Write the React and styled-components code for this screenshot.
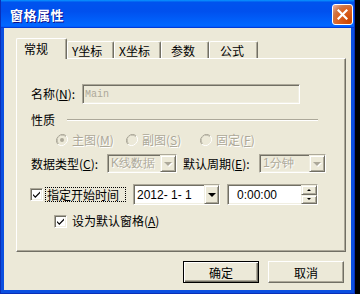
import React from "react";
import styled, { createGlobalStyle, css } from "styled-components";

const Global = createGlobalStyle`
  html, body { margin: 0; padding: 0; background: #000; }
  body { width: 360px; height: 294px; overflow: hidden; font-family: "Noto Sans CJK SC", "Liberation Sans", sans-serif; font-size: 12px; }
  #root { width: 360px; height: 294px; }
`;

const sunken = css`
  box-sizing: border-box;
  border: 1px solid;
  border-color: #aca899 #ffffff #ffffff #aca899;
  box-shadow: inset 1px 1px 0 #716f64, inset -1px -1px 0 #f1efe2;
`;

const raised = css`
  box-sizing: border-box;
  border: 1px solid;
  border-color: #f1efe2 #716f64 #716f64 #f1efe2;
  box-shadow: inset 1px 1px 0 #ffffff, inset -1px -1px 0 #aca899;
  background: #ece9d8;
`;

const Page = styled.div`
  display: flex;
  width: 360px;
  height: 294px;
  background: #000;
`;

const Window = styled.div`
  box-sizing: border-box;
  width: 355px;
  height: 294px;
  display: flex;
  flex-direction: column;
  background: #0b4fe0;
  border-left: 1px solid #0a2fb8;
  border-right: 1px solid #0a2fb8;
  border-bottom: 1px solid #0a2fb8;
`;

const TitleBar = styled.div`
  height: 28px;
  flex: none;
  display: flex;
  align-items: center;
  justify-content: space-between;
  padding: 0 1px 0 9px;
  background: linear-gradient(#0997ff, #0053ee 8%, #0050ee 40%, #0066ff 88%, #0066ff 93%, #005bff 95%, #003dd7 96%, #003dd7);
`;

const Title = styled.span`
  color: #fff;
  font-weight: bold;
  font-size: 13px;
  letter-spacing: 0.5px;
  text-shadow: 1px 1px 0 #0f1089;
`;

const CloseBtn = styled.div`
  box-sizing: border-box;
  width: 21px;
  height: 21px;
  border: 1px solid #fff;
  border-radius: 3px;
  background: radial-gradient(circle at 85% 85%, #cc4600 0%, #dc6527 55%, #cd7546 70%, #e5a189 90%);
  display: flex;
  align-items: center;
  justify-content: center;
`;

const Client = styled.div`
  flex: 1;
  margin: 0 3px 3px 3px;
  background: #ece9d8;
  display: flex;
  flex-direction: column;
  padding: 10px 0 0 12px;
`;

const TabStrip = styled.div`
  display: flex;
  align-items: flex-end;
  height: 20px;
`;

const Tab = styled.div`
  box-sizing: border-box;
  width: ${(p) => p.$w}px;
  height: ${(p) => (p.$active ? 21 : 17)}px;
  margin-bottom: ${(p) => (p.$active ? -1 : 0)}px;
  position: relative;
  z-index: ${(p) => (p.$active ? 2 : 1)};
  background: #ece9d8;
  border-top: 1px solid #fff;
  border-left: 1px solid #fff;
  border-right: 1px solid #716f64;
  box-shadow: inset -1px 0 0 #aca899;
  border-top-left-radius: 2px;
  border-top-right-radius: 2px;
  display: flex;
  align-items: center;
  padding-left: ${(p) => p.$pl}px;
  padding-bottom: ${(p) => (p.$active ? 2 : 0)}px;
  color: #000;
  font-size: 12px;
  font-family: "Noto Sans CJK SC", "Liberation Serif", sans-serif;
`;

const Panel = styled.div`
  box-sizing: border-box;
  width: 330px;
  height: 194px;
  border-top: 1px solid #fff;
  border-left: 1px solid #fff;
  border-right: 1px solid #716f64;
  border-bottom: 1px solid #716f64;
  box-shadow: inset -1px -1px 0 #aca899;
  display: flex;
  flex-direction: column;
  padding: 25px 0 0 14px;
`;

const Row = styled.div`
  display: flex;
  align-items: center;
  height: ${(p) => p.$h}px;
  margin-top: ${(p) => p.$mt || 0}px;
  margin-left: ${(p) => p.$ml || 0}px;
`;

const Label = styled.span`
  white-space: nowrap;
  color: ${(p) => (p.$disabled ? "#aca899" : "#000")};
  text-shadow: ${(p) => (p.$disabled ? "1px 1px 0 #fff" : "none")};
  width: ${(p) => (p.$w ? p.$w + "px" : "auto")};
  flex: none;
  font-size: 12px;
  line-height: 14px;
`;

const U = styled.span`
  text-decoration: underline;
`;

const TextField = styled.div`
  ${sunken};
  width: ${(p) => p.$w}px;
  height: ${(p) => p.$h}px;
  background: ${(p) => (p.$disabled ? "#ece9d8" : "#fff")};
  display: flex;
  align-items: center;
  padding-left: ${(p) => p.$pl || 3}px;
  color: ${(p) => (p.$disabled ? "#aca899" : "#000")};
  font-family: ${(p) => (p.$mono ? '"Liberation Mono", monospace' : '"Liberation Sans", sans-serif')};
  font-size: ${(p) => (p.$mono ? 10 : 12)}px;
  flex: none;
  margin-left: ${(p) => p.$ml || 0}px;
`;

const FieldText = styled.span`
  flex: 1;
  white-space: pre;
  text-shadow: ${(p) => (p.$disabled ? "1px 1px 0 #fff" : "none")};
`;

const Etched = styled.div`
  width: 251px;
  margin-left: 12px;
  border-top: 1px solid #aca899;
  border-bottom: 1px solid #fff;
`;

const RadioItem = styled.div`
  display: flex;
  align-items: center;
  gap: 4px;
  width: ${(p) => p.$w}px;
  flex: none;
`;

const DropBtn = styled.div`
  ${raised};
  width: ${(p) => p.$w || 16}px;
  height: 100%;
  display: flex;
  align-items: center;
  justify-content: center;
  flex: none;
`;

const Arrow = styled.div`
  width: 0;
  height: 0;
  border-left: ${(p) => p.$s}px solid transparent;
  border-right: ${(p) => p.$s}px solid transparent;
  ${(p) => (p.$up ? "border-bottom" : "border-top")}: ${(p) => p.$s}px solid ${(p) => (p.$disabled ? "#aca899" : "#000")};
  filter: ${(p) => (p.$disabled ? "drop-shadow(1px 1px 0 #fff)" : "none")};
`;

const Box = styled.div`
  ${sunken};
  width: 13px;
  height: 13px;
  background: #fff;
  flex: none;
  display: flex;
  align-items: center;
  justify-content: center;
  margin-left: ${(p) => p.$ml || 0}px;
`;

const Focus = styled.div`
  box-sizing: border-box;
  height: 15px;
  width: 81px;
  border: 1px dotted #000;
  display: flex;
  align-items: center;
  padding-left: 1px;
  margin-left: 2px;
`;

const Spin = styled.div`
  display: flex;
  flex-direction: column;
  width: 16px;
  height: 100%;
  flex: none;
`;

const SpinBtn = styled.div`
  ${raised};
  flex: 1;
  display: flex;
  align-items: center;
  justify-content: center;
`;

const Buttons = styled.div`
  display: flex;
  justify-content: flex-end;
  gap: 9px;
  margin-top: 9px;
  padding-right: 7px;
`;

const Button = styled.div`
  box-sizing: border-box;
  width: 76px;
  height: 22px;
  display: flex;
  align-items: center;
  justify-content: center;
  font-size: 12px;
  color: #000;
  background: #ece9d8;
  border: 1px solid ${(p) => (p.$default ? "#000" : "#f1efe2")};
  ${(p) =>
    p.$default
      ? css`
          box-shadow: inset 1px 1px 0 #fff, inset -1px -1px 0 #716f64, inset -2px -2px 0 #aca899;
        `
      : css`
          border-color: #fff #716f64 #716f64 #fff;
          box-shadow: inset -1px -1px 0 #aca899;
        `}
`;

const Radio = ({ checked }) => (
  <svg width="12" height="12" viewBox="0 0 12 12">
    <path d="M10.2 1.8 A6 6 0 0 0 1.8 10.2" stroke="#aca899" strokeWidth="1" fill="none" />
    <path d="M9.5 2.5 A5 5 0 0 0 2.5 9.5" stroke="#716f64" strokeWidth="1" fill="none" opacity="0.6" />
    <path d="M10.2 1.8 A6 6 0 0 1 1.8 10.2" stroke="#fff" strokeWidth="1" fill="none" />
    <circle cx="6" cy="6" r="4.5" fill="#ece9d8" />
    {checked && <circle cx="6" cy="6" r="2" fill="#aca899" />}
  </svg>
);

const Check = () => (
  <svg width="9" height="9" viewBox="0 0 9 9">
    <path d="M1 4 L3.3 6.3 L8 1.6 L8 3.2 L3.3 7.9 L1 5.6 Z" fill="#000" />
  </svg>
);

export default function App() {
  return (
    <>
      <Global />
      <Page>
        <Window>
          <TitleBar>
            <Title>窗格属性</Title>
            <CloseBtn>
              <svg width="11" height="11" viewBox="0 0 11 11">
                <path d="M1.5 1.5 L9.5 9.5 M9.5 1.5 L1.5 9.5" stroke="#fff" strokeWidth="2.2" strokeLinecap="square" />
              </svg>
            </CloseBtn>
          </TitleBar>
          <Client>
            <TabStrip>
              <Tab $active $w={51} $pl={7}>常规</Tab>
              <Tab $w={47} $pl={4}>Y坐标</Tab>
              <Tab $w={47} $pl={4}>X坐标</Tab>
              <Tab $w={48} $pl={9}>参数</Tab>
              <Tab $w={49} $pl={10}>公式</Tab>
            </TabStrip>
            <Panel>
              <Row $h={20}>
                <Label $w={51}>名称(<U>N</U>):</Label>
                <TextField $w={218} $h={20} $disabled $mono $pl={2}>
                  <FieldText>Main</FieldText>
                </TextField>
              </Row>
              <Row $h={16} $mt={8}>
                <Label>性质</Label>
                <Etched />
              </Row>
              <Row $h={16} $mt={4} $ml={25}>
                <RadioItem $w={70}>
                  <Radio checked />
                  <Label $disabled>主图(<U>M</U>)</Label>
                </RadioItem>
                <RadioItem $w={74}>
                  <Radio />
                  <Label $disabled>副图(<U>S</U>)</Label>
                </RadioItem>
                <RadioItem $w={70}>
                  <Radio />
                  <Label $disabled>固定(<U>F</U>)</Label>
                </RadioItem>
              </Row>
              <Row $h={19} $mt={6}>
                <Label $w={76}>数据类型(<U>C</U>):</Label>
                <TextField $w={70} $h={19} $disabled $pl={3}>
                  <FieldText $disabled>K线数据</FieldText>
                  <DropBtn $w={16}>
                    <Arrow $s={4} $disabled />
                  </DropBtn>
                </TextField>
                <Label $w={76} style={{ marginLeft: 6 }}>默认周期(<U>E</U>):</Label>
                <TextField $w={67} $h={19} $disabled $pl={3}>
                  <FieldText $disabled>1分钟</FieldText>
                  <DropBtn $w={16}>
                    <Arrow $s={4} $disabled />
                  </DropBtn>
                </TextField>
              </Row>
              <Row $h={21} $mt={11}>
                <Box $ml={-1}>
                  <Check />
                </Box>
                <Focus>
                  <Label>指定开始时间</Label>
                </Focus>
                <TextField $w={87} $h={21} $ml={7} $pl={3}>
                  <FieldText>2012- 1- 1</FieldText>
                  <DropBtn $w={15}>
                    <Arrow $s={4} />
                  </DropBtn>
                </TextField>
                <TextField $w={91} $h={21} $ml={7} $pl={9}>
                  <FieldText>0:00:00</FieldText>
                  <Spin>
                    <SpinBtn>
                      <Arrow $s={2} $up />
                    </SpinBtn>
                    <SpinBtn>
                      <Arrow $s={2} />
                    </SpinBtn>
                  </Spin>
                </TextField>
              </Row>
              <Row $h={14} $mt={9} $ml={23}>
                <Box>
                  <Check />
                </Box>
                <Label style={{ marginLeft: 5 }}>设为默认窗格(<U>A</U>)</Label>
              </Row>
            </Panel>
            <Buttons>
              <Button $default>确定</Button>
              <Button>取消</Button>
            </Buttons>
          </Client>
        </Window>
      </Page>
    </>
  );
}
